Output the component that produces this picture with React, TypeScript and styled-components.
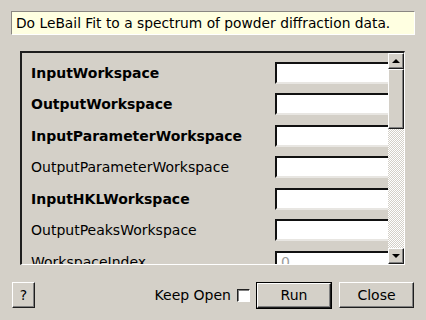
import React from 'react';
import styled, { createGlobalStyle } from 'styled-components';

const GlobalStyle = createGlobalStyle`
  html, body {
    margin: 0;
    padding: 0;
    background: #d4d0c8;
  }
  * {
    box-sizing: border-box;
  }
`;

const Dialog = styled.div`
  display: flex;
  flex-direction: column;
  width: 426px;
  height: 320px;
  padding: 11px 11px 0;
  background: #d4d0c8;
  font-family: 'DejaVu Sans', 'Liberation Sans', sans-serif;
  font-size: 14px;
  color: #000;
  overflow: hidden;
`;

const Description = styled.div`
  height: 24px;
  padding: 0 4px;
  line-height: 23px;
  font-size: 13.8px;
  background: #ffffe1;
  border-top: 1px solid #8a8782;
  border-left: 1px solid #8a8782;
  border-right: 1px solid #fff;
  border-bottom: 1px solid #fff;
  white-space: nowrap;
`;

const Frame = styled.div`
  display: flex;
  width: 385px;
  height: 214px;
  margin: 16px 0 0 9px;
  border-top: 2px solid #1e1e1e;
  border-left: 2px solid #1e1e1e;
  border-right: 1px solid #fff;
  border-bottom: 1px solid #fff;
`;

const Content = styled.div`
  flex: 1;
  overflow: hidden;
  display: grid;
  grid-template-columns: 244px 130px;
  grid-auto-rows: 22px;
  row-gap: 9.45px;
  align-items: center;
  padding: 9px 0 0 9px;
`;

const Label = styled.div<{ $required?: boolean }>`
  font-weight: ${(p) => (p.$required ? 'bold' : 'normal')};
  white-space: nowrap;
`;

const Field = styled.div`
  height: 22px;
  background: #fff;
  border-top: 2px solid #111;
  border-left: 2px solid #111;
  border-bottom: 2px solid #e8e6e2;
  padding: 0 4px;
  line-height: 19px;
  color: #9a9a9a;
`;

const ScrollBar = styled.div`
  display: flex;
  flex-direction: column;
  width: 16px;
  flex-shrink: 0;
`;

const Raised = styled.div<{ $h: number }>`
  height: ${(p) => p.$h}px;
  display: flex;
  align-items: center;
  justify-content: center;
  background: #d4d0c8;
  border-top: 1px solid #fff;
  border-left: 1px solid #fff;
  border-right: 1px solid #1e1e1e;
  border-bottom: 1px solid #1e1e1e;
  box-shadow: inset -1px -1px 0 #808080;
`;

const Track = styled.div`
  flex: 1;
  background: repeating-conic-gradient(#fff 0 25%, #d4d0c8 0 50%) 0 0 / 2px 2px;
`;

const Arrow = styled.div<{ $down?: boolean }>`
  width: 0;
  height: 0;
  border-left: 4px solid transparent;
  border-right: 4px solid transparent;
  ${(p) =>
    p.$down ? 'border-top: 4px solid #000;' : 'border-bottom: 4px solid #000;'}
`;

const Footer = styled.div`
  display: flex;
  align-items: center;
  margin-top: 17px;
  padding: 0 1px;
`;

const Button = styled.button<{ $w: number; $default?: boolean }>`
  width: ${(p) => p.$w}px;
  height: ${(p) => (p.$default ? 25 : 26)}px;
  font-family: inherit;
  font-size: 14px;
  color: #000;
  background: #d4d0c8;
  padding: 0;
  border-top: 1px solid #fff;
  border-left: 1px solid #fff;
  border-right: 1px solid #1e1e1e;
  border-bottom: 1px solid #1e1e1e;
  box-shadow: ${(p) =>
    p.$default
      ? '0 0 0 1px #000, inset -1px -1px 0 #808080'
      : 'inset -1px -1px 0 #808080'};
`;

const CloseButton = styled(Button)`
  margin-left: 8px;
`;

const Spacer = styled.div`
  flex: 1;
`;

const KeepOpen = styled.label`
  display: flex;
  align-items: center;
  gap: 6px;
  margin-right: 7px;
`;

const Check = styled.span`
  width: 13px;
  height: 13px;
  background: #fff;
  border-top: 1px solid #222;
  border-left: 1px solid #222;
  border-right: 1px solid #fff;
  border-bottom: 1px solid #fff;
  box-shadow: inset 1px 1px 0 #808080;
`;

const params = [
  { name: 'InputWorkspace', required: true },
  { name: 'OutputWorkspace', required: true },
  { name: 'InputParameterWorkspace', required: true },
  { name: 'OutputParameterWorkspace' },
  { name: 'InputHKLWorkspace', required: true },
  { name: 'OutputPeaksWorkspace' },
  { name: 'WorkspaceIndex', value: '0' },
];

export default function App() {
  return (
    <Dialog>
      <GlobalStyle />
      <Description>Do LeBail Fit to a spectrum of powder diffraction data.</Description>
      <Frame>
        <Content>
          {params.map((p) => (
            <React.Fragment key={p.name}>
              <Label $required={p.required}>{p.name}</Label>
              <Field>{p.value}</Field>
            </React.Fragment>
          ))}
        </Content>
        <ScrollBar>
          <Raised $h={16}>
            <Arrow />
          </Raised>
          <Raised $h={60} />
          <Track />
          <Raised $h={16}>
            <Arrow $down />
          </Raised>
        </ScrollBar>
      </Frame>
      <Footer>
        <Button $w={23}>?</Button>
        <Spacer />
        <KeepOpen>
          Keep Open
          <Check />
        </KeepOpen>
        <Button $w={74} $default>
          Run
        </Button>
        <CloseButton $w={75}>Close</CloseButton>
      </Footer>
    </Dialog>
  );
}
